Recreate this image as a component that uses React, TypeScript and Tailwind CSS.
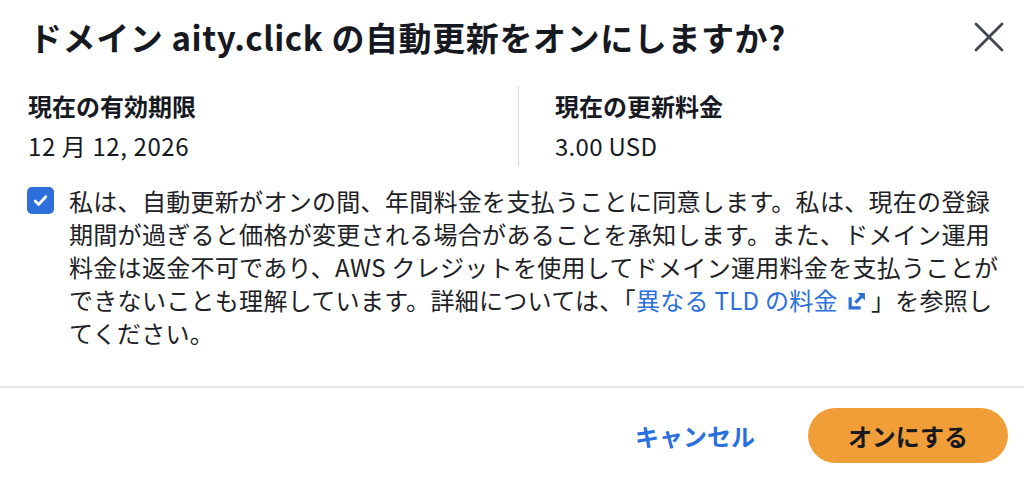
import { useState } from "react";

const App = () => {
  const [agreed, setAgreed] = useState(true);

  return (
    <div className="w-[1024px] h-[477px] bg-white text-[#16191f] font-['Noto_Sans_CJK_JP',sans-serif] overflow-hidden">
      {/* Header */}
      <header className="flex items-start justify-between pl-[29px] pr-[18px] pt-[17px]">
        <h2 className="text-[33px] font-bold leading-[40px] tracking-[0.6px]">
          ドメイン aity.click の自動更新をオンにしますか?
        </h2>
        <button className="mt-[3px] w-[34px] h-[34px] flex items-center justify-center text-[#414750]">
          <svg width="30" height="30" viewBox="0 0 30 30" fill="none" stroke="currentColor" strokeWidth={2.8} strokeLinecap="round">
            <path d="M2 2l26 26M28 2L2 28" />
          </svg>
        </button>
      </header>

      {/* Current values */}
      <div className="mt-[29px] grid grid-cols-[490px_1fr] pl-[28px]">
        <div>
          <div className="text-[24px] font-bold leading-[40px]">現在の有効期限</div>
          <div className="text-[24px] leading-[40px] tracking-[0.6px]">12 月 12, 2026</div>
        </div>
        <div className="border-l border-[#d5d8dc] pl-[36px]">
          <div className="text-[24px] font-bold leading-[40px]">現在の更新料金</div>
          <div className="text-[24px] leading-[40px] tracking-[0.3px]">3.00 USD</div>
        </div>
      </div>

      {/* Agreement */}
      <div className="mt-[18px] flex items-start gap-[15px] pl-[27px] pr-[18px]">
        <button
          onClick={() => setAgreed(!agreed)}
          className={`mt-[3px] shrink-0 w-[27px] h-[27px] rounded-[5px] flex items-center justify-center ${
            agreed ? "bg-[#2f6fdc]" : "border-2 border-[#7d8998] bg-white"
          }`}
        >
          {agreed && (
            <svg width="17" height="17" viewBox="0 0 16 16" fill="none" stroke="white" strokeWidth={2.6} strokeLinecap="round" strokeLinejoin="round">
              <path d="M3 8.5l3.2 3.2L13 4.5" />
            </svg>
          )}
        </button>
        <p className="text-[24px] leading-[33px] tracking-[0.3px] text-[#1d2126]">
          私は、自動更新がオンの間、年間料金を支払うことに同意します。私は、現在の登録期間が過ぎると価格が変更される場合があることを承知します。また、ドメイン運用料金は返金不可であり、AWS クレジットを使用してドメイン運用料金を支払うことができないことも理解しています。詳細については、「
          <a href="#" className="text-[#2a6fdb]">
            異なる TLD の料金
            <svg className="inline-block ml-[9px] mr-[4px] mb-[4px] align-middle" width="20" height="20" viewBox="0 0 19 19" fill="none">
              <path d="M3 6v10h10" stroke="#2a6fdb" strokeWidth={3} />
              <path d="M8 11l7-7" stroke="#2a6fdb" strokeWidth={3} />
              <path d="M10 2h7v7z" fill="#2a6fdb" />
            </svg>
          </a>
          」を参照してください。
        </p>
      </div>

      {/* Footer */}
      <div className="mt-[37px] border-t-2 border-[#e6e6e6] flex items-center justify-end gap-[53px] pt-[20px] pr-[16px]">
        <button className="text-[24px] font-bold text-[#2a6fdb]">キャンセル</button>
        <button className="w-[200px] h-[55px] rounded-full bg-[#f19e39] text-[24px] font-bold text-[#16191f]">
          オンにする
        </button>
      </div>
    </div>
  );
};

export default App;
